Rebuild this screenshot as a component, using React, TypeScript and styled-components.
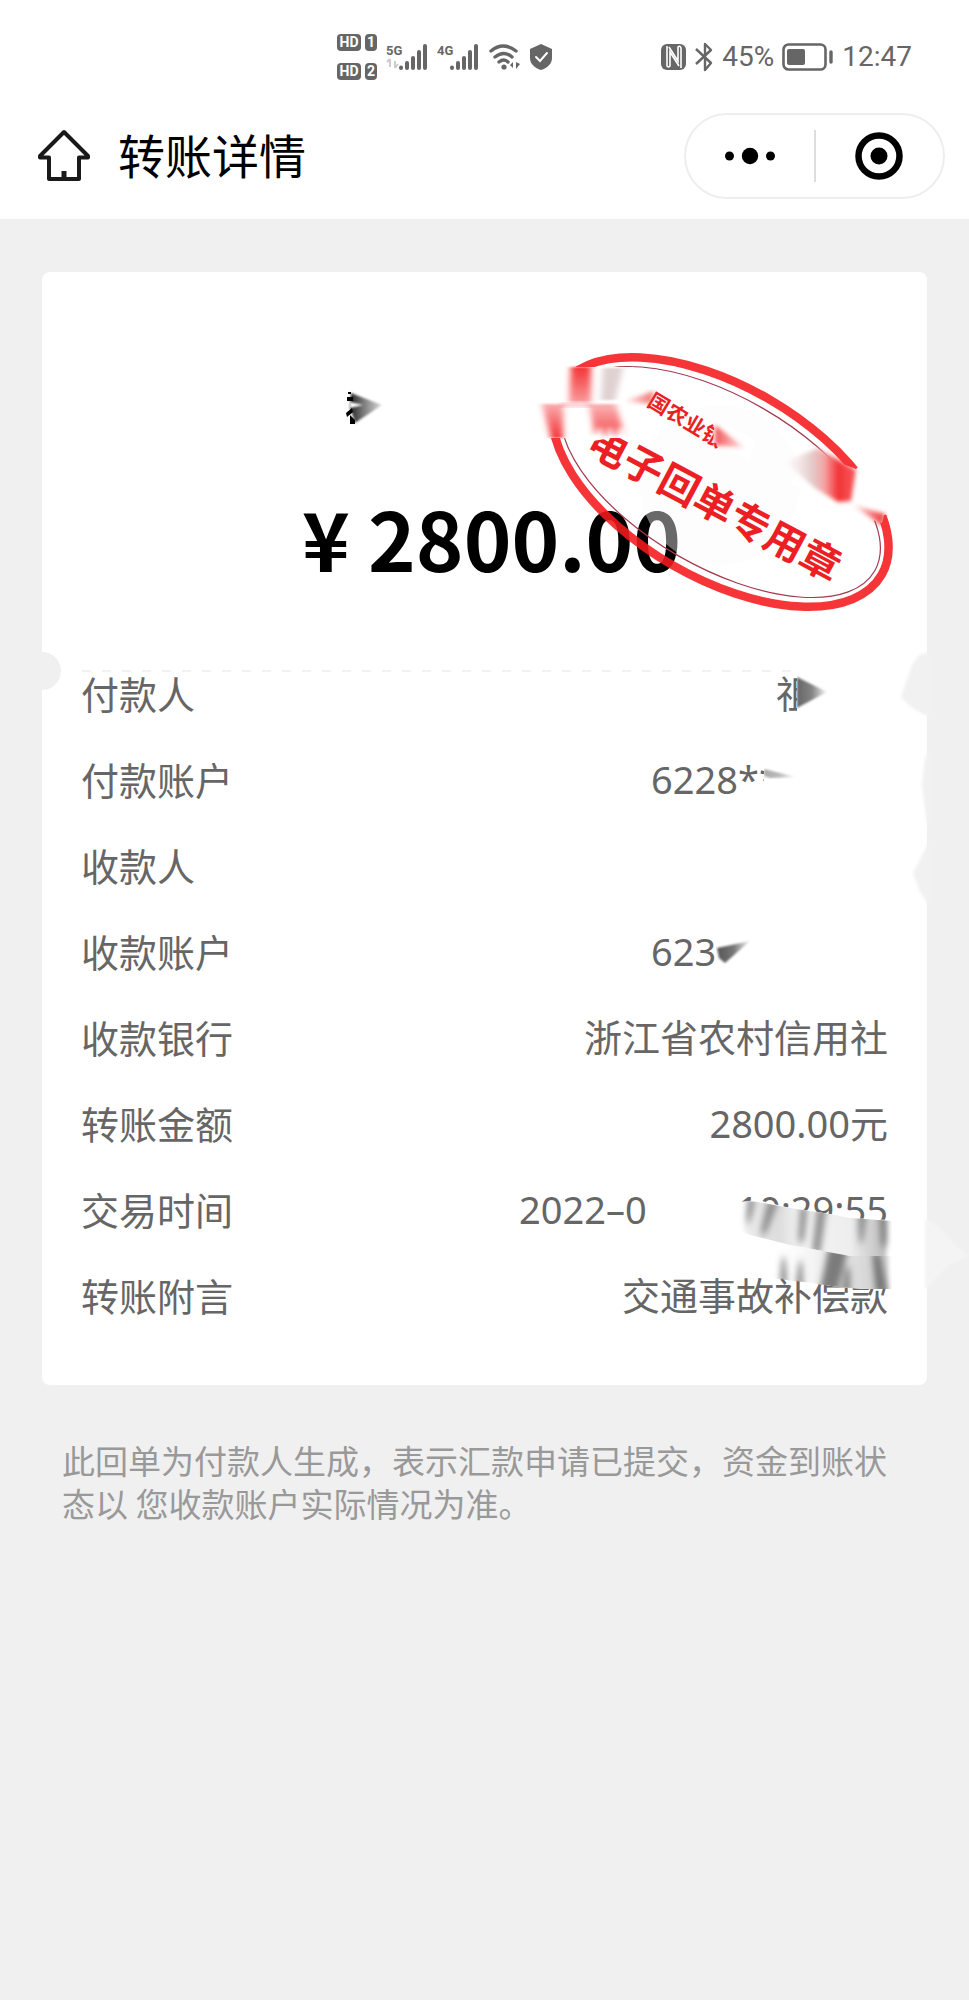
import React from "react";
import styled, { createGlobalStyle } from "styled-components";

const GlobalStyle = createGlobalStyle`
  * { box-sizing: border-box; }
  html { background: #f0f0f0; }
  body {
    margin: 0;
    background: #f0f0f0;
    color: #666;
    font-family: "Noto Sans CJK SC", "Noto Sans", sans-serif;
  }
`;

const Page = styled.div`
  min-height: 100vh;
  overflow-x: hidden;
`;

const TopArea = styled.div`
  background: #fff;
`;

/* ---------- status bar ---------- */

const StatusBar = styled.div`
  display: flex;
  justify-content: space-between;
  align-items: center;
  height: 100px;
  padding: 14px 57px 0 337px;
  color: #666;
`;

const StatusGroup = styled.div<{ $gap: number }>`
  display: flex;
  align-items: center;
  gap: ${(p) => p.$gap}px;
`;

const SimStack = styled.div`
  display: grid;
  gap: 12px;
`;

const SimLine = styled.div`
  display: flex;
  gap: 4px;
`;

const Badge = styled.span<{ $width: number }>`
  width: ${(p) => p.$width}px;
  height: 17px;
  border-radius: 4px;
  background: #666;
  color: #fff;
  font: 700 14px/17px Roboto, sans-serif;
  text-align: center;
`;

const StatusText = styled.span`
  font: 400 28px/32px Roboto, sans-serif;
`;

/* ---------- navigation ---------- */

const NavBar = styled.header`
  display: flex;
  align-items: center;
  height: 119px;
  padding: 0 24px 7px 36px;
`;

const IconButton = styled.button`
  display: flex;
  align-items: center;
  justify-content: center;
  padding: 0;
  border: 0;
  background: none;
`;

const Title = styled.h1`
  flex: 1;
  margin: 0 0 0 26px;
  padding-bottom: 4px;
  color: #000;
  font-size: 47px;
  font-weight: 400;
  line-height: 60px;
`;

const Capsule = styled.div`
  display: grid;
  grid-template-columns: 1fr 2px 1fr;
  align-items: center;
  width: 261px;
  height: 86px;
  border: 2px solid #eee;
  border-radius: 43px;
`;

const CapsuleDivider = styled.span`
  height: 52px;
  background: #ddd;
`;

/* ---------- receipt ---------- */

const Receipt = styled.main`
  position: relative;
  margin: 53px 42px 0;
  padding-bottom: 66px;
  border-radius: 8px;
  background: #fff;
`;

const Summary = styled.section`
  position: relative;
  height: 397px;
  padding-top: 113px;
`;

const PayeeLine = styled.div`
  display: flex;
  height: 46px;
  padding-left: 34%;
  align-items: center;
`;

const Amount = styled.p`
  margin: 46px 0 0;
  padding-left: 14px;
  color: #000;
  font-size: 81px;
  font-weight: 700;
  line-height: 120px;
  text-align: center;
`;

const Perforation = styled.div`
  position: absolute;
  left: 40px;
  right: 126px;
  top: 398px;
  height: 2px;
  background: repeating-linear-gradient(90deg, #f2f2f2 0 9px, transparent 9px 20px);
`;

const Notch = styled.span`
  position: absolute;
  left: -19px;
  top: 380px;
  width: 38px;
  height: 38px;
  border-radius: 50%;
  background: #f0f0f0;
`;

const StampLayer = styled.svg`
  position: absolute;
  top: 58px;
  right: 7px;
`;

const EdgeLayer = styled.svg`
  position: absolute;
  top: 360px;
  right: -42px;
`;

const SmearLayer = styled.svg`
  position: absolute;
  top: 900px;
  right: 20px;
`;

const Details = styled.dl`
  display: grid;
  gap: 38px;
  margin: 0;
  padding: 0 39px;
`;

const Row = styled.div`
  display: flex;
  justify-content: space-between;
  height: 48px;
  font-size: 38px;
  line-height: 48px;
  white-space: nowrap;
`;

const Label = styled.dt``;

const Value = styled.dd<{ $width?: number }>`
  display: flex;
  justify-content: ${(p) => (p.$width ? "flex-start" : "flex-end")};
  width: ${(p) => (p.$width ? `${p.$width}px` : "auto")};
  margin: 0;
  font-family: "Noto Sans", "Noto Sans CJK SC", sans-serif;
`;

const SmudgeDrawing = styled.svg<{ $overlap: number }>`
  flex: none;
  margin-left: ${(p) => -p.$overlap}px;
`;

const TimeParts = styled.span`
  display: flex;
  justify-content: space-between;
  width: 100%;
`;

const Note = styled.p`
  margin: 54px 62px 0;
  color: #999;
  font-size: 33px;
  line-height: 43px;
`;

/* ---------- drawings ---------- */

const Signal = ({ label, weak }: { label: string; weak?: boolean }) => (
  <svg width="42" height="30" viewBox="0 0 42 30" fill="#666">
    <text x="0" y="13" fontFamily="'Liberation Sans Narrow', Roboto, sans-serif" fontSize="13" fontWeight="700">{label}</text>
    {weak && <path d="M4 17v8M4 17l-3 3M9 19v7M9 26l3-4" stroke="#ccc" strokeWidth="2" fill="none" />}
    <g stroke="#666" strokeWidth="4" strokeLinecap="round">
      <path d="M16 26v-.5M22 26v-5M28 26v-10M34 26V10M40 26V4" transform="translate(-1 0)" />
    </g>
  </svg>
);

const Wifi = () => (
  <svg width="32" height="30" viewBox="0 0 32 30" fill="none" stroke="#666" strokeWidth="3.4" strokeLinecap="round">
    <path d="M3 9q12-10 25 0M7 15q9-7 17 0M11 20q5-4 9 0" />
    <circle cx="16" cy="25" r="2.6" fill="#666" stroke="none" />
    <path d="M25 20v6l-3-3zM28 20v7l4-5z" fill="#666" stroke="none" />
  </svg>
);

const Shield = () => (
  <svg width="24" height="28" viewBox="0 0 24 28">
    <path d="M12 1 23 6v9c0 6-5 10-11 12C6 25 1 21 1 15V6z" fill="#666" />
    <path d="m7 14 4 4 7-8" fill="none" stroke="#fff" strokeWidth="2" strokeLinecap="round" />
  </svg>
);

const Nfc = () => (
  <svg width="25" height="26" viewBox="0 0 25 26">
    <rect width="25" height="26" rx="6" fill="#666" />
    <path d="M6 2v20q1 2 3 0V8l9 14M8 3l9 14V3q2-2 3 1v20" fill="none" stroke="#fff" strokeWidth="1.6" />
  </svg>
);

const Bluetooth = () => (
  <svg width="20" height="30" viewBox="0 0 20 30" fill="none" stroke="#666" strokeWidth="2.4" strokeLinejoin="round">
    <path d="m2 7 15 14-6 7V2l6 6L2 22" />
  </svg>
);

const Battery = () => (
  <svg width="52" height="28" viewBox="0 0 52 28">
    <rect x="1.5" y="1.5" width="42" height="25" rx="5" fill="none" stroke="#666" strokeWidth="2.6" />
    <rect x="5" y="6" width="18" height="16" rx="2" fill="#666" />
    <path d="M49 9v10" stroke="#666" strokeWidth="3.4" strokeLinecap="round" />
  </svg>
);

const Home = () => (
  <svg width="56" height="56" viewBox="0 0 56 56" fill="none" stroke="#1a1a1a" strokeWidth="4" strokeLinejoin="round" strokeLinecap="round">
    <path d="M28 4 52 28v1.500H43V51H13V29.500H4V28z" />
    <path d="M28 43v7" strokeWidth="5" strokeLinecap="butt" />
  </svg>
);

const More = () => (
  <svg width="54" height="20" viewBox="0 0 54 20">
    <circle cx="6.500" cy="10" r="4.500" />
    <circle cx="27" cy="10" r="8.200" />
    <circle cx="47.500" cy="10" r="4.500" />
  </svg>
);

const Target = () => (
  <svg width="48" height="48" viewBox="0 0 48 48">
    <circle cx="24" cy="24" r="20.500" fill="none" stroke="#000" strokeWidth="6.500" />
    <circle cx="24" cy="24" r="8.500" />
  </svg>
);

const NameSmudge = () => (
  <svg width="44" height="40" viewBox="0 0 44 40">
    <defs>
      <linearGradient id="nameFade">
        <stop offset="0" stopColor="#222" />
        <stop offset=".4" stopColor="#777" />
        <stop offset="1" stopColor="#ddd" />
      </linearGradient>
      <filter id="soft1"><feGaussianBlur stdDeviation="1.200" /></filter>
    </defs>
    <path d="M8 5 39 17 12 35 9 25 7 20z" fill="url(#nameFade)" filter="url(#soft1)" />
    <path d="M7 14 20 17 7 20z" fill="#fff" filter="url(#soft1)" />
    <path d="M4 9h6v4H4zM3 25l6-5 1 4-6 5zM7 27l5 5v4H7zM5 4h3v2H5z" />
  </svg>
);

type SmudgeProps = { d: string; id: string; from: string; overlap?: number };

const GreySmudge = ({ d, id, from, overlap = 0 }: SmudgeProps) => (
  <SmudgeDrawing $overlap={overlap} width="40" height="48" viewBox="0 0 40 48">
    <defs>
      <linearGradient id={id}>
        <stop offset="0" stopColor={from} />
        <stop offset=".5" stopColor={from} stopOpacity=".8" />
        <stop offset="1" stopColor={from} stopOpacity=".05" />
      </linearGradient>
      <filter id={`${id}Blur`}><feGaussianBlur stdDeviation="1.300" /></filter>
    </defs>
    {overlap > 0 && <rect width="40" height="48" fill="#fff" />}
    <path d={d} fill={`url(#${id})`} filter={`url(#${id}Blur)`} />
  </SmudgeDrawing>
);

const Stamp = () => (
  <StampLayer width="400" height="300" viewBox="520 330 400 300" aria-label="电子回单专用章">
    <defs>
      <filter id="s2"><feGaussianBlur stdDeviation="2" /></filter>
      <filter id="s3" x="-30%" width="160%"><feGaussianBlur stdDeviation="3 1" /></filter>
      <linearGradient id="down" x2="0" y2="1">
        <stop offset="0" stopColor="#f33336" />
        <stop offset="1" stopColor="#f33336" stopOpacity=".5" />
      </linearGradient>
      <linearGradient id="up" x2="0" y2="1">
        <stop offset="0" stopColor="#f33336" stopOpacity=".4" />
        <stop offset="1" stopColor="#f33336" />
      </linearGradient>
      <linearGradient id="across">
        <stop offset="0" stopColor="#f5c9c9" stopOpacity="0" />
        <stop offset=".35" stopColor="#d9bcbc" stopOpacity=".7" />
        <stop offset=".55" stopColor="#f5a5a5" />
        <stop offset=".75" stopColor="#f33336" />
        <stop offset="1" stopColor="#f33336" stopOpacity=".8" />
      </linearGradient>
      <linearGradient id="fade">
        <stop offset="0" stopColor="#ee2a2e" />
        <stop offset="1" stopColor="#ee2a2e" stopOpacity=".1" />
      </linearGradient>
      <linearGradient id="fadeIn">
        <stop offset="0" stopColor="#e33" stopOpacity=".1" />
        <stop offset="1" stopColor="#e33" />
      </linearGradient>
    </defs>
    <circle cx="720" cy="485" r="80" fill="#fafbfc" fillOpacity=".42" />
    <g transform="rotate(30 720.5 482)" fill="none">
      <ellipse cx="720.500" cy="482" rx="186" ry="96" stroke="#f5191d" strokeOpacity=".88" strokeWidth="8.500" />
      <ellipse cx="720.500" cy="482" rx="178" ry="85" stroke="#a33a50" strokeWidth="1.200" />
    </g>
    <g fill="#ec1f24" fontFamily="'Noto Sans CJK SC', sans-serif" fontWeight="700">
      <text transform="translate(584 451) rotate(28)" fontSize="40">电子回单专用章</text>
      <text transform="translate(646 405) rotate(31)" fontSize="21">国农业银</text>
    </g>
    <path d="M530 367h104l-3 25 4 46h-24l-18 3-30-3h-33z" fill="#fff" />
    <path d="M715 420l40 20-5 20-37-18z" fill="#fff" />
    <path d="M810 452l46 17 8-8 40 30-8 22-12 2-2 8-32-10-60-30z" fill="#fff" />
    <path d="M571 367h20v35h-22z" fill="url(#down)" filter="url(#s3)" />
    <path d="M603 368h20l-8 32h-14z" fill="#b99" fillOpacity=".45" filter="url(#s3)" />
    <path d="M542 404h21v34h-12z" fill="url(#up)" filter="url(#s3)" />
    <path d="M560 403h32v4h-32z" fill="#f33336" fillOpacity=".3" filter="url(#s2)" />
    <path d="M589 404h27l9 33-5-12-5 13-5-13-5 13-5-13-5 11z" fill="url(#up)" fillOpacity=".9" filter="url(#s3)" />
    <path d="M624 401 654 391 651 404 640 403z" fill="url(#fadeIn)" fillOpacity=".7" filter="url(#s2)" />
    <path d="M715 425 745 448 715 445z" fill="url(#fade)" fillOpacity=".8" filter="url(#s2)" />
    <path d="M785 462 818 448 856 470 851 501 838 502 815 488z" fill="url(#across)" filter="url(#s2)" />
    <path d="M853 505 885 514 882 526z" fill="url(#fadeIn)" filter="url(#s2)" />
  </StampLayer>
);

const EdgeSmudges = () => (
  <EdgeLayer width="84" height="680" viewBox="885 632 84 680">
    <defs><filter id="edge"><feGaussianBlur stdDeviation="1.500" /></filter></defs>
    <g fill="#f1f1f1" filter="url(#edge)">
      <path d="M931 652 919 655 912 665 901 697 912 708 931 718z" />
      <path d="M931 748 925 758 922 785 927 824 931 826z" />
      <path d="M931 838 913 873 920 892 931 908z" />
    </g>
    <path d="M925 1218 940 1228 955 1245 969 1256 950 1264 925 1290z" fill="#f4f4f4" filter="url(#edge)" />
  </EdgeLayer>
);

const TimeSmear = () => (
  <SmearLayer width="180" height="150" viewBox="727 1172 180 150">
    <defs>
      <filter id="streak" x="-20%" y="-20%" width="140%" height="140%"><feGaussianBlur stdDeviation="3 4" /></filter>
      <filter id="baseBlur"><feGaussianBlur stdDeviation="2" /></filter>
      <clipPath id="upperBand"><path d="M738 1200 758 1202 790 1208 830 1214 850 1218 892 1221V1256L850 1256 790 1245 735 1231z" /></clipPath>
      <clipPath id="lowerBand"><path d="M760 1238 790 1245 850 1256 892 1256V1289L864 1289 838 1287 812 1283 760 1277z" /></clipPath>
      <linearGradient id="upperFade">
        <stop offset="0" stopColor="#ddd" stopOpacity=".5" />
        <stop offset=".25" stopColor="#ddd" />
        <stop offset=".4" stopColor="#f4f4f4" />
        <stop offset=".75" stopColor="#eee" />
        <stop offset="1" stopColor="#bbb" />
      </linearGradient>
      <linearGradient id="lowerFade">
        <stop offset="0" stopColor="#fff" stopOpacity="0" />
        <stop offset=".45" stopColor="#eee" />
        <stop offset="1" stopColor="#ccc" />
      </linearGradient>
    </defs>
    <path d="M738 1202 758 1200 790 1208 830 1214 850 1218 889 1220 890 1287 864 1289 838 1287 812 1283 775 1277 735 1235z" fill="#fff" />
    <g clipPath="url(#upperBand)">
      <path d="M748 1198H886V1270H780L744 1231z" fill="url(#upperFade)" filter="url(#baseBlur)" />
      <g filter="url(#streak)" fill="#666" fillOpacity=".7">
        <path d="M748 1198h8l-6 24h-4zM768 1200h11l-13 34h-6zM800 1206h8l-4 36h-6zM817 1206h10l-7 48h-8zM858 1210h9l-4 32h-4zM879 1210h8v36h-6z" />
      </g>
    </g>
    <g clipPath="url(#lowerBand)">
      <path d="M770 1236H888V1292H770z" fill="url(#lowerFade)" filter="url(#baseBlur)" />
      <g filter="url(#streak)" fill="#555" fillOpacity=".75">
        <path d="M782 1258h3l2 26h-7zM799 1262h3l1 26h-7zM829 1246h20l-12 48h-18zM872 1252h8l8 42h-12zM846 1268h4v26h-8z" />
      </g>
    </g>
  </SmearLayer>
);

/* ---------- page ---------- */

export default function App() {
  return (
    <Page lang="zh-CN">
      <GlobalStyle />
      <TopArea>
        <StatusBar>
          <StatusGroup $gap={9}>
            <SimStack>
              <SimLine><Badge $width={24}>HD</Badge><Badge $width={12}>1</Badge></SimLine>
              <SimLine><Badge $width={24}>HD</Badge><Badge $width={12}>2</Badge></SimLine>
            </SimStack>
            <Signal label="5G" weak />
            <Signal label="4G" />
            <Wifi />
            <Shield />
          </StatusGroup>
          <StatusGroup $gap={8}>
            <Nfc />
            <Bluetooth />
            <StatusText>45%</StatusText>
            <Battery />
            <StatusText>12:47</StatusText>
          </StatusGroup>
        </StatusBar>
        <NavBar>
          <IconButton aria-label="首页"><Home /></IconButton>
          <Title>转账详情</Title>
          <Capsule>
            <IconButton aria-label="更多"><More /></IconButton>
            <CapsuleDivider />
            <IconButton aria-label="关闭"><Target /></IconButton>
          </Capsule>
        </NavBar>
      </TopArea>

      <Receipt>
        <Summary>
          <PayeeLine><NameSmudge /></PayeeLine>
          <Amount>¥ 2800.00</Amount>
          <Stamp />
          <Perforation />
          <Notch />
        </Summary>
        <Details>
          <Row>
            <Label>付款人</Label>
            <Value $width={112}>
              祖
              <GreySmudge id="g1" from="#666" overlap={17} d="M0 8 30 23 0 39z" />
            </Value>
          </Row>
          <Row>
            <Label>付款账户</Label>
            <Value $width={237}>
              6228**
              <GreySmudge id="g2" from="#aaa" overlap={16} d="M0 14 32 22 6 23 0 21z" />
            </Value>
          </Row>
          <Row><Label>收款人</Label><Value /></Row>
          <Row>
            <Label>收款账户</Label>
            <Value $width={237}>
              623
              <GreySmudge id="g3" from="#555" d="M1 21 34 14 9 36 3 31z" />
            </Value>
          </Row>
          <Row><Label>收款银行</Label><Value>浙江省农村信用社</Value></Row>
          <Row><Label>转账金额</Label><Value>2800.00元</Value></Row>
          <Row>
            <Label>交易时间</Label>
            <Value $width={369}>
              <TimeParts><span>2022–0</span><span>10:29:55</span></TimeParts>
            </Value>
          </Row>
          <Row><Label>转账附言</Label><Value>交通事故补偿款</Value></Row>
        </Details>
        <TimeSmear />
        <EdgeSmudges />
      </Receipt>

      <Note>此回单为付款人生成，表示汇款申请已提交，资金到账状态以 您收款账户实际情况为准。</Note>
    </Page>
  );
}
